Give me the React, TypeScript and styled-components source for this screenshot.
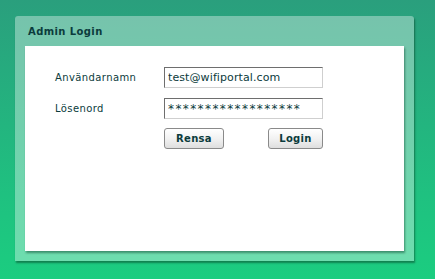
import React from "react";
import styled, { createGlobalStyle } from "styled-components";

const Global = createGlobalStyle`
  html, body { margin: 0; padding: 0; }
  body {
    width: 435px;
    height: 279px;
    overflow: hidden;
    background: linear-gradient(to bottom, #2a9f7d 0%, #1fc180 70%, #1bcd80 100%);
    font-family: "DejaVu Sans", Verdana, sans-serif;
  }
`;

const Page = styled.div`
  padding: 16px 0 0 15px;
`;

const Panel = styled.div`
  width: 399px;
  height: 245px;
  background: rgba(255, 255, 255, 0.36);
  border-radius: 3px 3px 0 0;
  box-shadow: 1px 2px 2px rgba(0, 40, 20, 0.45);
  display: flex;
  flex-direction: column;
`;

const Header = styled.div`
  height: 30px;
  padding-left: 13px;
  display: flex;
  align-items: center;
  font-size: 10px;
  font-weight: bold;
  letter-spacing: 0.4px;
  color: #0b3b3c;
`;

const Body = styled.div`
  margin: 0 10px;
  height: 205px;
  background: #ffffff;
  box-shadow: 1px 2px 2px rgba(0, 50, 30, 0.45);
  padding: 21px 0 0 30px;
  box-sizing: border-box;
`;

const Form = styled.div`
  display: grid;
  grid-template-columns: 109px 159px;
  row-gap: 10px;
  align-items: center;
`;

const Label = styled.label`
  font-size: 10px;
  color: #0b3b3c;
  letter-spacing: 0.4px;
`;

const Input = styled.input<{ $secret?: boolean }>`
  box-sizing: border-box;
  width: 159px;
  height: 21px;
  margin: 0;
  padding: 0 3px;
  border: 1px solid;
  border-color: #6e6e6e #cfcfcf #cfcfcf #6e6e6e;
  font-family: "DejaVu Sans", Verdana, sans-serif;
  font-size: ${(p) => (p.$secret ? "12px" : "11px")};
  letter-spacing: ${(p) => (p.$secret ? "1.4px" : "0.1px")};
  color: #0b3b3c;
  background: #fff;
  outline: none;
`;

const Buttons = styled.div`
  grid-column: 2;
  display: flex;
  justify-content: space-between;
  margin-top: -1px;
`;

const Button = styled.button<{ $w: number }>`
  box-sizing: border-box;
  width: ${(p) => p.$w}px;
  height: 21px;
  margin: 0;
  padding: 0;
  border: 1px solid #8a8a8a;
  border-radius: 3px;
  background: linear-gradient(to bottom, #ffffff 0%, #f2f2f2 50%, #dedede 100%);
  font-family: "DejaVu Sans", Verdana, sans-serif;
  font-size: 10px;
  font-weight: bold;
  letter-spacing: 0.3px;
  color: #0b3b3c;
`;

export default function App() {
  return (
    <>
      <Global />
      <Page>
        <Panel>
          <Header>Admin Login</Header>
          <Body>
            <Form>
              <Label>Användarnamn</Label>
              <Input defaultValue="test@wifiportal.com" />
              <Label>Lösenord</Label>
              <Input $secret defaultValue="******************" />
              <Buttons>
                <Button $w={60}>Rensa</Button>
                <Button $w={55}>Login</Button>
              </Buttons>
            </Form>
          </Body>
        </Panel>
      </Page>
    </>
  );
}
